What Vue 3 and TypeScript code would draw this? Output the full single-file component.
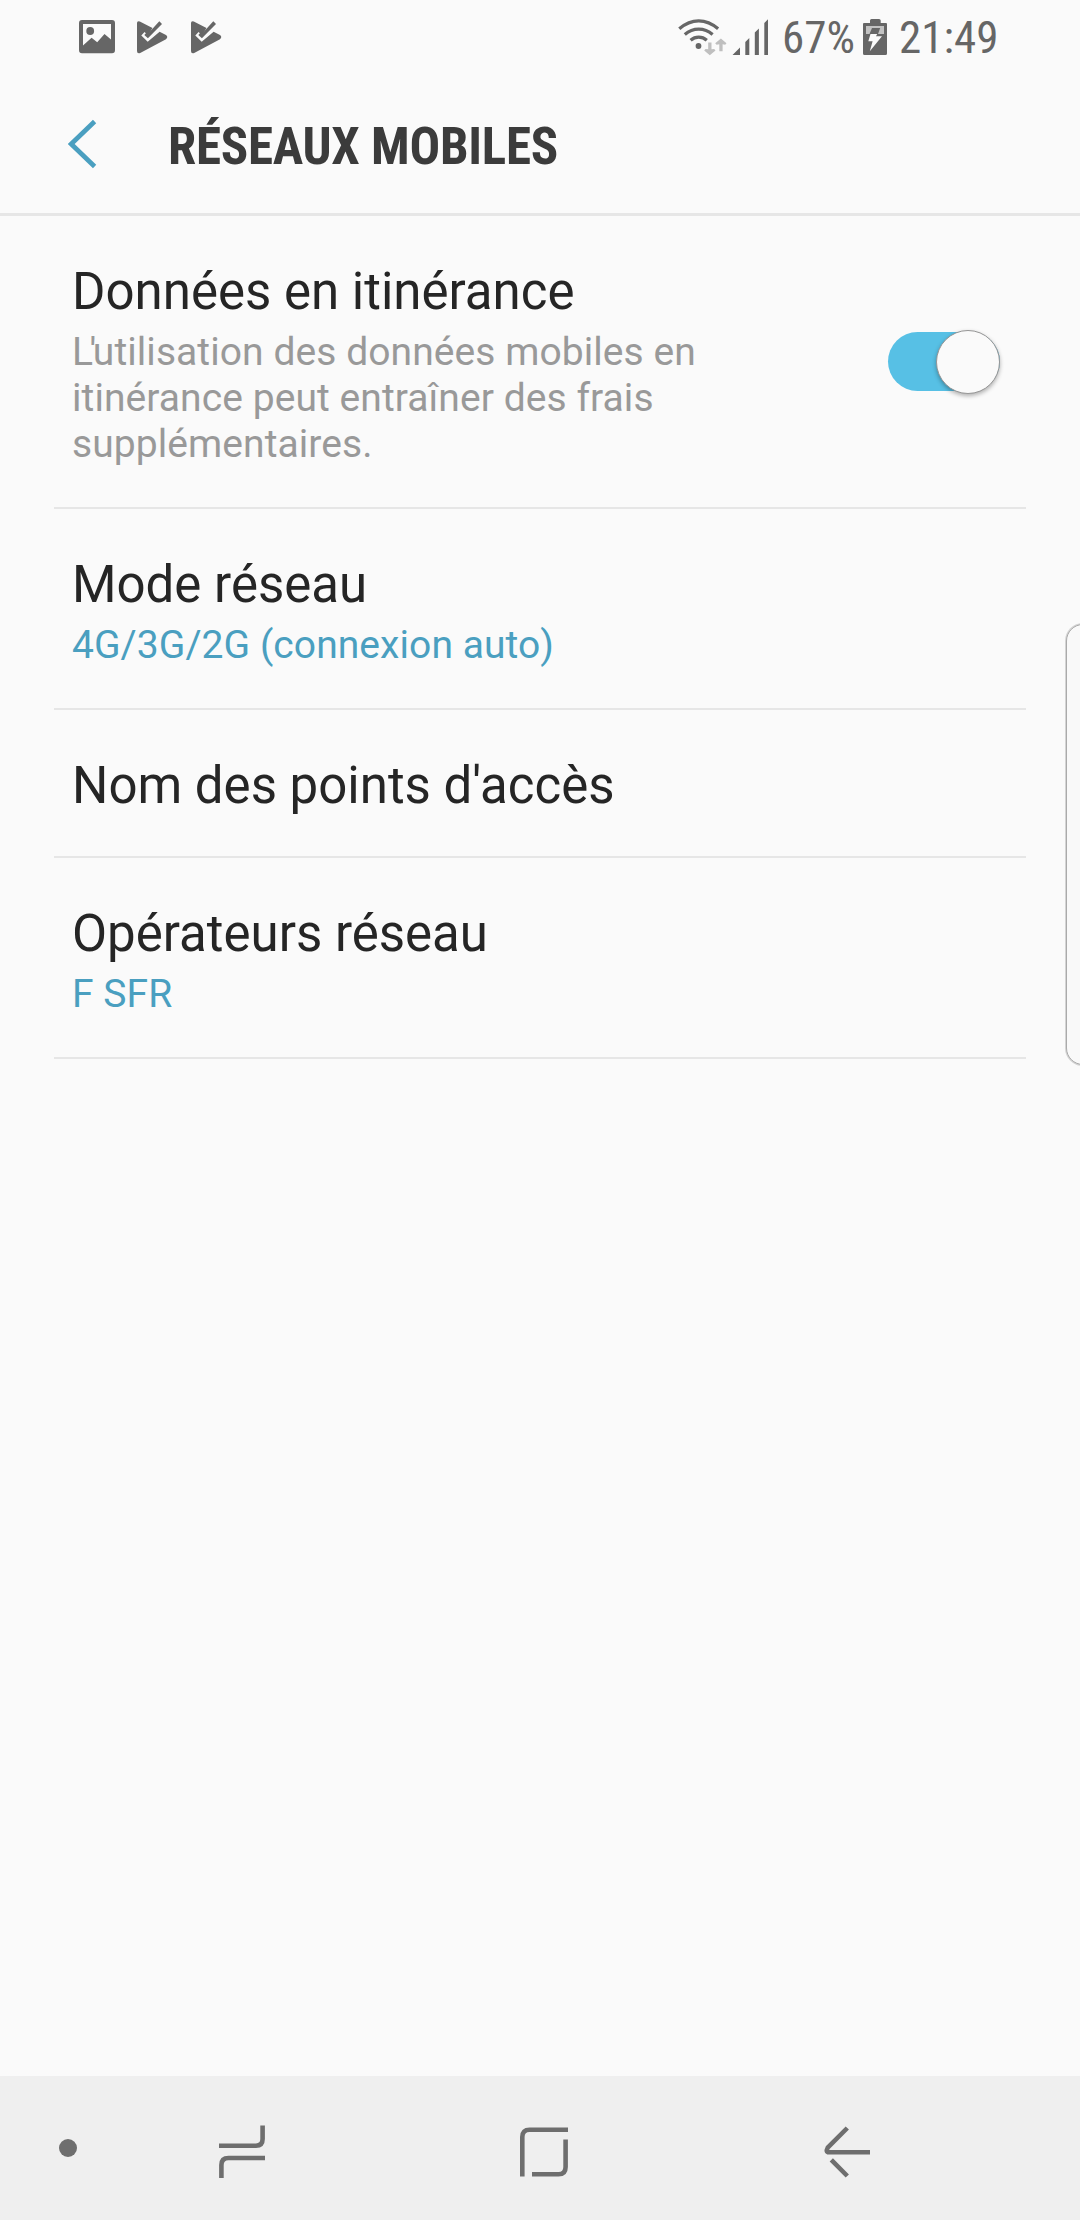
<script setup lang="ts">
import { ref } from 'vue'

interface Setting {
  title: string
  note?: string
  value?: string
  toggle?: boolean
}

const settings: Setting[] = [
  {
    title: 'Données en itinérance',
    note: "L'utilisation des données mobiles en itinérance peut entraîner des frais supplémentaires.",
    toggle: true,
  },
  { title: 'Mode réseau', value: '4G/3G/2G (connexion auto)' },
  { title: "Nom des points d'accès" },
  { title: 'Opérateurs réseau', value: 'F SFR' },
]

const roaming = ref(true)
</script>

<template>
  <div class="screen">
    <header class="status">
      <div class="group">
        <svg class="picture" width="36" height="34" viewBox="0 0 36 34">
          <path fill-rule="evenodd" d="M3 0H33Q36 0 36 3V30Q36 33.3 33 33.3H3Q0 33.3 0 30V3Q0 0 3 0ZM4 4V25.5L12.6 17.7L18.2 22.3L25.5 14L32 19.5V4Z" />
          <circle cx="11.2" cy="11" r="3.9" />
        </svg>
        <svg v-for="n in 2" :key="n" class="play" width="31" height="33" viewBox="0 0 31 33">
          <path d="M0 2Q0-.5 2.8.4L15.5 7L10.9 14.4L7.6 11.1L4.3 14.4L10.7 20.8L22.6 10.8L29 14Q31.5 16 29 18.2L3.2 32Q0 33 0 30Z" />
          <path d="M22.3.3L25 3L10.9 17.3L7.3 13.9L9.8 11.3L12.3 11.2Z" />
        </svg>
      </div>
      <div class="group">
        <svg class="wifi" width="50" height="38" viewBox="0 0 50 38">
          <g fill="none" stroke="#666" stroke-width="3.3">
            <path d="M1.3 9.7Q10.5 1.8 20.7 1.8T40.1 9.7" />
            <path d="M6.8 15.4Q13 10.2 20.7 10.2T34.6 15.4" />
            <path d="M12.6 21.2Q16.2 18.2 20.7 18.2T28.8 21.2" />
          </g>
          <circle cx="20.5" cy="27" r="2.9" />
          <path fill="#bfbfbf" d="M30.2 23.5H33.5V30.2L36.2 29.9L37.5 31.5L31.8 36.2L26.2 31.5L27.5 29.9L30.2 30.2ZM41.3 32.3H44.6V25.3L47.2 25.8L48.5 24.2L42.9 19.5L37.2 24.2L38.6 25.8L41.3 25.3Z" />
        </svg>
        <svg class="signal" width="37" height="37" viewBox="0 0 37 37">
          <path d="M.5 36L8 28.6V36ZM13.3 36V23L17.3 19V36ZM22.8 36V13.5L26.9 9.5V36ZM32.3 36V4L36 .3V36Z" />
        </svg>
        <span class="battery-level">67%</span>
        <svg class="battery" width="24" height="36" viewBox="0 0 24 36">
          <path d="M7 4V1.5Q7 0 8.5 0H16Q17.7 0 17.7 1.5V4H23Q24 4 24 5V34.5Q24 36 22.5 36H1.5Q0 36 0 34.5V5Q0 4 1 4Z" />
          <path fill="#c2c2c2" d="M3 7H21V15H3Z" />
          <path d="M9 9H17.2L15 15H6.5Z" />
          <path fill="#fafafa" d="M7.5 15H14.2L13 17.2H19L6.8 32.2L9.6 22.3H5.3Z" />
        </svg>
        <span class="clock">21:49</span>
      </div>
    </header>

    <div class="app-bar">
      <svg class="up" width="30" height="50" viewBox="0 0 30 50">
        <path d="M26.6 2.5L3.2 25L26.6 47.5" fill="none" stroke="#4a9fc0" stroke-width="4.7" />
      </svg>
      <h1>RÉSEAUX MOBILES</h1>
    </div>

    <main>
      <section v-for="item in settings" :key="item.title" class="row">
        <div class="copy">
          <h2>{{ item.title }}</h2>
          <p v-if="item.note" class="note">{{ item.note }}</p>
          <p v-if="item.value" class="value">{{ item.value }}</p>
        </div>
        <div v-if="item.toggle" class="switch" :class="{ on: roaming }" @click="roaming = !roaming">
          <span class="knob"></span>
        </div>
      </section>
    </main>

    <div class="edge-handle"></div>

    <nav>
      <span class="dot"></span>
      <svg class="recents" width="48" height="54" viewBox="0 0 48 54">
        <path d="M0 20.7H37Q43.6 20.7 43.6 14V.5" />
        <path d="M46 33H9.5Q2.4 33 2.4 40V53" />
      </svg>
      <svg class="home" width="48" height="50" viewBox="0 0 48 50">
        <path d="M48 2.8H9.5Q2.3 2.8 2.3 10V49.5M45.6 12.5V40Q45.6 47.3 38.5 47.3H12" />
      </svg>
      <svg class="back" width="47" height="53" viewBox="0 0 47 53">
        <path d="M23.3 2L3.7 21.7Q1.3 26.3 5 26.3H46M7.3 33.8L23.3 50" />
      </svg>
    </nav>
  </div>
</template>

<style>
body {
  background: #fafafa;
}
</style>

<style scoped>
.screen {
  position: relative;
  display: flex;
  flex-direction: column;
  width: 1080px;
  height: 2220px;
  overflow: hidden;
  background: #fafafa;
  font-family: Roboto, sans-serif;
}
h1, h2, p {
  margin: 0;
  font-weight: 400;
}
svg {
  display: block;
  flex: none;
}
.status {
  display: flex;
  justify-content: space-between;
  height: 72px;
  padding: 0 79px;
  box-sizing: border-box;
  fill: #666;
  color: #666;
}
.group {
  display: flex;
  align-items: flex-start;
}
.picture { margin: 20px 22px 0 0; }
.play { margin: 21px 23px 0 0; }
.wifi { margin: 19px 4px 0 0; }
.signal { margin: 19px 13px 0 0; }
.battery { margin: 19px 12px 0 0; }
.battery-level, .clock {
  font-family: 'Roboto Condensed', Roboto, sans-serif;
  font-stretch: 75%;
  font-size: 45px;
  line-height: 54px;
  margin-top: 11px;
  white-space: nowrap;
}
.battery-level { width: 81px; }
.clock { width: 102px; }
.app-bar {
  display: flex;
  align-items: flex-start;
  height: 144px;
  box-sizing: border-box;
  border-bottom: 3px solid #e6e6e6;
}
.up { margin: 47px 70px 0 68px; }
h1 {
  font-family: 'Roboto Condensed', Roboto, sans-serif;
  font-stretch: 75%;
  font-weight: 700;
  font-size: 51px;
  line-height: 60px;
  letter-spacing: -0.27px;
  color: #3b3b3b;
  margin-top: 45px;
  white-space: nowrap;
}
main {
  flex: 1;
  margin: 0 54px;
}
.row {
  display: flex;
  justify-content: space-between;
  align-items: center;
  padding: 45px 26px 40px 18px;
  border-bottom: 2px solid #e6e6e6;
}
h2 {
  font-size: 51px;
  line-height: 61px;
  color: #252525;
}
p {
  margin-top: 7px;
  font-size: 39px;
  line-height: 46px;
  letter-spacing: 0.07px;
}
.copy { width: 680px; }
.note { color: #999; }
.note::first-letter { letter-spacing: -3.5px; }
.value { color: #4a9fc0; }
.switch {
  display: flex;
  align-items: flex-start;
  width: 112px;
  height: 59px;
  border-radius: 30px;
  background: #bbb;
  margin-top: -5px;
}
.switch.on {
  justify-content: flex-end;
  background: #57c0e5;
}
.knob {
  flex: none;
  box-sizing: border-box;
  width: 64px;
  height: 64px;
  margin-top: -2px;
  border: 1px solid #969696;
  border-radius: 50%;
  background: #fafafa;
  box-shadow: 0 2px 4px rgba(0, 0, 0, 0.3);
}
.edge-handle {
  position: absolute;
  top: 624px;
  right: -20px;
  width: 34px;
  height: 441px;
  box-sizing: border-box;
  border: 1px solid #aaa;
  border-radius: 20px;
  background: #f9f9f9;
  box-shadow: 0 0 0 1px #d4d4d4;
}
nav {
  display: flex;
  align-items: flex-start;
  height: 144px;
  background: #efefef;
  fill: none;
  stroke: #6e6e6e;
  stroke-width: 4.6;
}
.dot {
  width: 18px;
  height: 18px;
  margin: 63px 0 0 59px;
  border-radius: 50%;
  background: #6e6e6e;
}
.recents { margin: 49px 0 0 142px; }
.home { margin: 51px 0 0 253px; }
.back { margin: 50px 0 0 256px; }
</style>
